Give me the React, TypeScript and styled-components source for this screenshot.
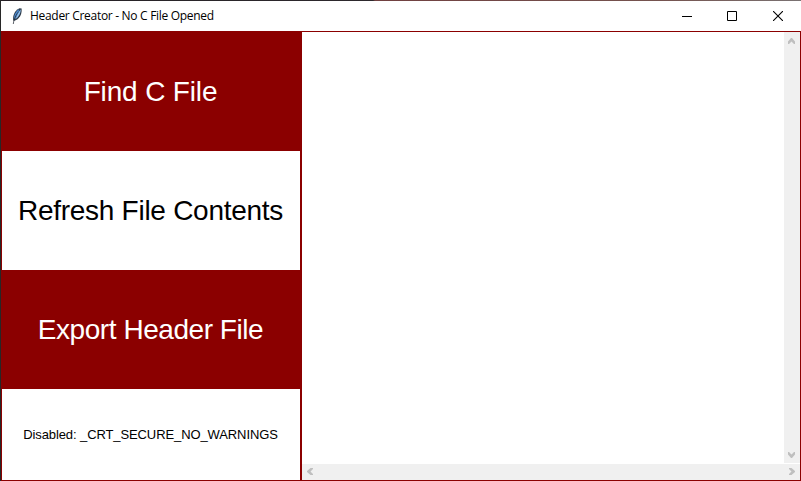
import React from "react";
import styled, { createGlobalStyle } from "styled-components";

const RED = "#8b0000";

const GlobalStyle = createGlobalStyle`
  * { box-sizing: border-box; }
  body { margin: 0; background: #fff; overflow: hidden; }
`;

const Window = styled.div`
  width: 801px;
  height: 481px;
  display: grid;
  grid-template-rows: 1px 30px 450px;
  border-left: 1px solid #272727;
  background: #fff;
`;

const TopEdge = styled.div`
  background: linear-gradient(90deg, #252025 0, #2d292d 372px, #704040 374px, #75534f 660px, #7a7272 800px);
`;

const TitleBar = styled.header`
  display: flex;
  align-items: center;
  padding-left: 8px;
`;

const Title = styled.h1`
  flex: 1;
  margin: 0 0 0 5px;
  font: 400 12px/16px "Segoe UI", "Open Sans", sans-serif;
  letter-spacing: -0.3px;
  color: #000;
  white-space: nowrap;
`;

const Captions = styled.div`
  display: flex;
`;

const Caption = styled.button<{ $width?: number }>`
  width: ${(p) => p.$width ?? 46}px;
  height: 30px;
  padding: 0;
  border: 0;
  background: none;
  display: grid;
  place-items: center;
  svg { display: block; }
`;

const Frame = styled.main`
  display: grid;
  grid-template-columns: 298px 498px;
  column-gap: 2px;
  padding: 1px;
  background: ${RED};
`;

const Sidebar = styled.nav`
  display: grid;
  grid-template-rows: 119px 119px 119px 91px;
`;

const Action = styled.button<{ $filled?: boolean; $small?: boolean; $tracking: number }>`
  border: 0;
  padding: 0 1px 0 0;
  background: ${(p) => (p.$filled ? RED : "#fff")};
  color: ${(p) => (p.$filled ? "#fff" : "#000")};
  font: ${(p) => (p.$small ? "13px" : "28px")} / 32px "Liberation Sans", Arial, sans-serif;
  letter-spacing: ${(p) => p.$tracking}px;
  white-space: nowrap;
`;

const Editor = styled.section`
  display: grid;
  grid-template-rows: 431px 1px 16px;
  background: #fff;
`;

const TextRow = styled.div`
  display: grid;
  grid-template-columns: 1fr 16px;
`;

const TextArea = styled.div`
  background: #fff;
`;

const Scrollbar = styled.div<{ $vertical?: boolean }>`
  grid-row: ${(p) => (p.$vertical ? "auto" : "3")};
  display: flex;
  flex-direction: ${(p) => (p.$vertical ? "column" : "row")};
  justify-content: space-between;
  background: #f0f0f0;
  svg { display: block; }
`;

const turns = { up: 0, right: 90, down: 180, left: -90 };

const Chevron = ({ to }: { to: keyof typeof turns }) => {
  const vertical = to === "up" || to === "down";
  const center = vertical ? "7.5 9" : "8 7.5";
  return (
    <svg width="16" height={vertical ? 17 : 16}>
      <path
        d="M-3.5 .5 L-.5 -3 H.5 L3.5 .5 V3 H2.5 L0 .5 L-2.5 3 H-3.5 Z"
        transform={`translate(${center}) rotate(${turns[to]})`}
        fill="#bfbfbf"
      />
    </svg>
  );
};

const Feather = () => (
  <svg width="16" height="18" viewBox="0 0 16 18">
    <path d="M4.2 13.5 C3.6 8.5 5.5 3.5 10.5 1.2 L12.6 1.4 C13 5 12 9 9.3 11.6 C7.8 13 6.3 13.6 5.2 13.8 Z" fill="#2d3a48" />
    <path d="M4.9 11.5 C5 8 6.8 4 10.2 2 L9.2 6.2 L6 12.3 Z" fill="#4b8ad0" />
    <path d="M6.4 12.2 C9.8 10 11.8 6 11.9 2.2 C10 4 8 8 6.4 12.2 Z" fill="#8fc0f0" />
    <path d="M4.3 17 C4.5 13.5 6.5 8.5 9 5.2" fill="none" stroke="#1b232d" strokeWidth=".7" />
  </svg>
);

export default function App() {
  return (
    <>
      <GlobalStyle />
      <Window>
        <TopEdge />
        <TitleBar>
          <Feather />
          <Title>Header Creator - No C File Opened</Title>
          <Captions>
            <Caption $width={44} aria-label="Minimize">
              <svg width="10" height="10"><path d="M0 5.5H10" stroke="#000" /></svg>
            </Caption>
            <Caption aria-label="Maximize">
              <svg width="10" height="10"><path d="M.5 .5H9.5V9.5H.5Z" fill="none" stroke="#000" /></svg>
            </Caption>
            <Caption aria-label="Close">
              <svg width="10" height="10"><path d="M0 0L10 10M10 0L0 10" stroke="#000" strokeWidth="1.1" /></svg>
            </Caption>
          </Captions>
        </TitleBar>
        <Frame>
          <Sidebar>
            <Action $filled $tracking={-0.15}>Find C File</Action>
            <Action $tracking={-0.27}>Refresh File Contents</Action>
            <Action $filled $tracking={-0.45}>Export Header File</Action>
            <Action $small $tracking={-0.1}>Disabled: _CRT_SECURE_NO_WARNINGS</Action>
          </Sidebar>
          <Editor>
            <TextRow>
              <TextArea />
              <Scrollbar $vertical>
                <Chevron to="up" />
                <Chevron to="down" />
              </Scrollbar>
            </TextRow>
            <Scrollbar>
              <Chevron to="left" />
              <Chevron to="right" />
            </Scrollbar>
          </Editor>
        </Frame>
      </Window>
    </>
  );
}
